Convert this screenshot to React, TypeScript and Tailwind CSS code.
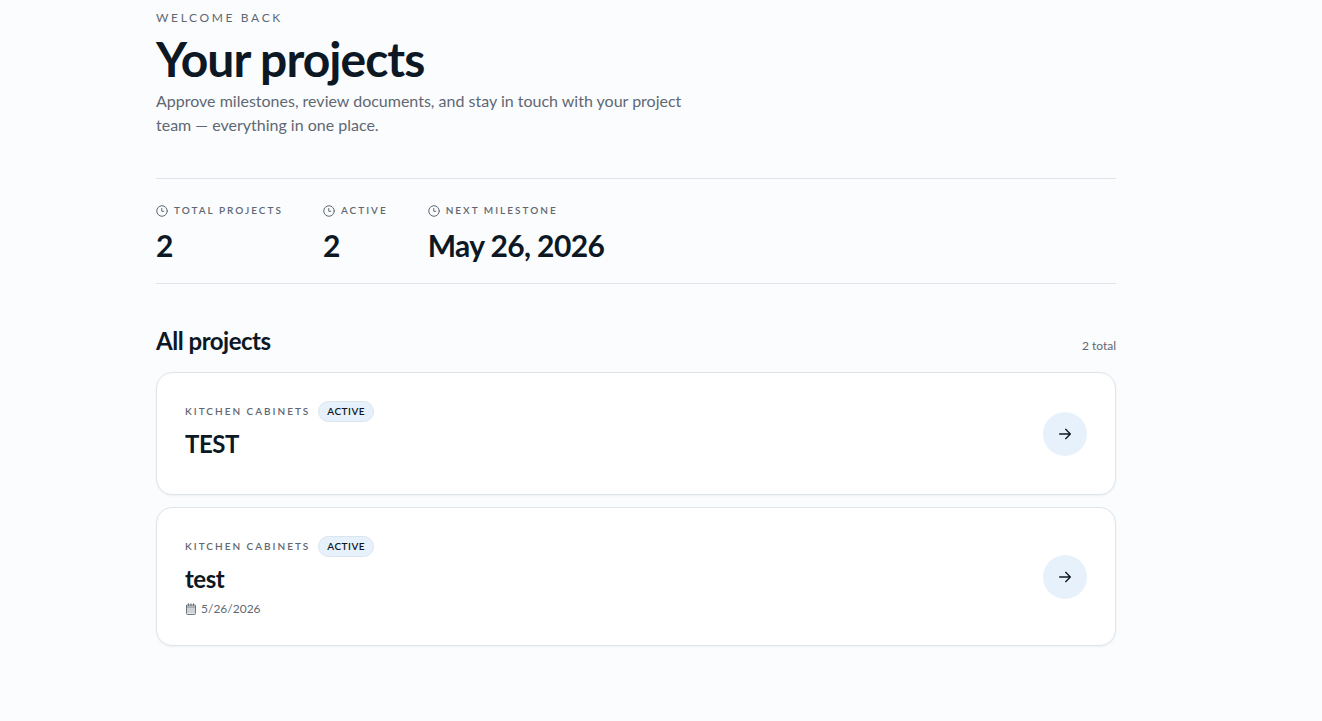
type Project = {
    id: number
    category: string
    status: string
    title: string
    date?: string
}

const stats = [
    { label: "Total projects", value: "2" },
    { label: "Active", value: "2" },
    { label: "Next milestone", value: "May 26, 2026" },
]

const projects: Project[] = [
    { id: 1, category: "Kitchen cabinets", status: "Active", title: "TEST" },
    { id: 2, category: "Kitchen cabinets", status: "Active", title: "test", date: "5/26/2026" },
]

const ClockIcon = () => (
    <svg className="size-3" viewBox="0 0 24 24" fill="none" stroke="currentColor" strokeWidth="2" strokeLinecap="round" strokeLinejoin="round">
        <circle cx="12" cy="12" r="10.5" />
        <path d="M11.5 7v5.500h4" />
    </svg>
)

const CalendarIcon = () => (
    <svg className="size-3" viewBox="0 0 24 24" fill="none" stroke="currentColor" strokeWidth="1.8" strokeLinecap="round" strokeLinejoin="round">
        <rect x="4" y="9" width="16" height="12" fill="currentColor" fillOpacity="0.3" stroke="none" />
        <path d="M7 1.5v4M12 1.5v4M17 1.5v4M3 8h18" />
        <path d="M3 5v16a2 2 0 0 0 2 2h14a2 2 0 0 0 2-2V5a1 1 0 0 0-1-1H4a1 1 0 0 0-1 1z" />
    </svg>
)

const ArrowIcon = () => (
    <svg className="size-4" viewBox="0 0 24 24" fill="none" stroke="currentColor" strokeWidth="2" strokeLinecap="round" strokeLinejoin="round">
        <path d="M4 12h16M13 5l7 7-7 7" />
    </svg>
)

const ProjectCard: React.FC<{ project: Project }> = ({ project }) => {
    return (
        <a href={`#project-${project.id}`} className="flex items-center justify-between rounded-2xl border border-[#dfe4ea] bg-white p-7 shadow-xs">
            <div>
                <div className="flex items-center gap-2">
                    <span className="text-[10px] font-semibold tracking-[0.2em] text-[#5f6872] uppercase">{project.category}</span>
                    <span className="rounded-full border border-[#dce4ec] bg-[#e7f1fc] px-2 py-0.5 text-[10px] leading-[15px] font-semibold tracking-wider uppercase">{project.status}</span>
                </div>
                <h3 className="mt-1.5 text-2xl font-bold tracking-[-0.02em]">{project.title}</h3>
                <div className="mt-1.5 flex items-center gap-1 text-xs text-[#5f6872]">
                    {project.date && <><CalendarIcon /><span>{project.date}</span></>}
                </div>
            </div>
            <span className="flex size-11 items-center justify-center rounded-full bg-[#e7f1fc]">
                <ArrowIcon />
            </span>
        </a>
    )
}

export default function App() {
    return (
        <div className="min-h-screen bg-[#fbfcfe] pr-[50px] font-['Lato',sans-serif] text-[#0c1824]">
            <main className="mx-auto max-w-5xl px-8 pt-2.5 pb-16">
                <header>
                    <p className="text-xs tracking-[0.22em] text-[#5f6872] uppercase">Welcome back</p>
                    <h1 className="mt-[9px] text-5xl font-bold tracking-[-0.02em]">Your projects</h1>
                    <p className="mt-1.5 max-w-[560px] text-base text-[#5f6872]">
                        Approve milestones, review documents, and stay in touch with your project team — everything in one place.
                    </p>
                </header>

                <section className="mt-[41px] flex gap-10 border-y border-[#dfe4ea] pt-6 pb-5">
                    {stats.map((stat) => (
                        <div key={stat.label}>
                            <div className="flex items-center gap-1.5 text-[10px] font-semibold tracking-[0.2em] text-[#5f6872] uppercase">
                                <ClockIcon />
                                <span>{stat.label}</span>
                            </div>
                            <p className="mt-[9px] text-3xl font-bold tracking-[-0.02em]">{stat.value}</p>
                        </div>
                    ))}
                </section>

                <section className="mt-[41px]">
                    <div className="flex items-baseline justify-between">
                        <h2 className="text-2xl font-bold tracking-[-0.02em]">All projects</h2>
                        <span className="text-xs text-[#5f6872]">2 total</span>
                    </div>
                    <div className="mt-[15px] flex flex-col gap-3">
                        {projects.map((project) => (
                            <ProjectCard key={project.id} project={project} />
                        ))}
                    </div>
                </section>
            </main>
        </div>
    )
}
